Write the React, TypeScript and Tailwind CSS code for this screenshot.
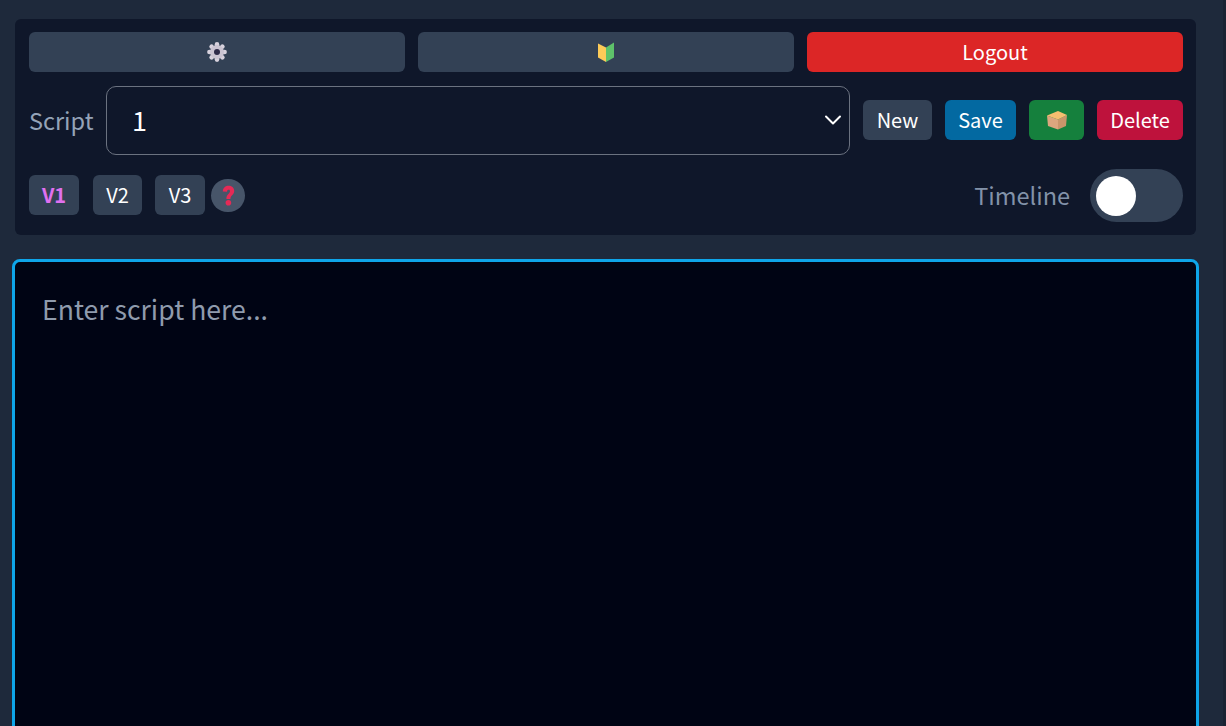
const font = { fontFamily: '"Noto Sans CJK JP", "Noto Sans", sans-serif' };

function Gear() {
  const teeth = [0, 45, 90, 135, 180, 225, 270, 315];
  return (
    <svg width="20" height="20" viewBox="0 0 20 20">
      {teeth.map((a) => (
        <circle key={a} cx="10" cy="2.4" r="2.3" fill="#d8d2de" transform={`rotate(${a} 10 10)`} />
      ))}
      <circle cx="10" cy="10" r="7" fill="#cbc4d2" />
      <circle cx="10" cy="10" r="3" fill="#2e2a48" />
    </svg>
  );
}

function Beginner() {
  return (
    <svg width="18" height="20" viewBox="0 0 18 20">
      <path d="M1 1.5 L9 5.5 V20 L1 15.5 Z" fill="#fdcb58" />
      <path d="M17 0.5 L9 5.5 V20 L17 15.5 Z" fill="#5ec26a" />
    </svg>
  );
}

function Box() {
  return (
    <svg width="22" height="20" viewBox="0 0 22 20">
      <path d="M1 5.5 L12 9.5 V19.5 L2 16 Z" fill="#dca67e" />
      <path d="M21 5 L12 9.5 V19.5 L20 16 Z" fill="#c9956a" />
      <path d="M1 5.5 L12 1 L21 5 L12 9.5 Z" fill="#f5be70" />
    </svg>
  );
}

function Question() {
  return (
    <svg width="13" height="21" viewBox="0 0 13 21">
      <path d="M0.8 6.4 C0.8 -1.2 12.2 -1.2 12.2 6 C12.2 9.8 8.6 10 8.4 14 H4.4 C4.3 9.2 8 8.6 8 6.2 C8 4.2 5 4.4 5 6.8 Z" fill="#e62a56" />
      <circle cx="6.4" cy="17.8" r="2.8" fill="#e62a56" />
    </svg>
  );
}

export default function App() {
  return (
    <div style={font} className="flex h-[726px] overflow-hidden bg-[#1e293b]">
      <div className="flex-1 pl-3 pr-6 pt-[19px]">
        <div className="ml-[3px] mr-[3px] flex flex-col rounded-md bg-[#0f172a] pl-[14px] pr-[13px] pt-[13px] pb-[13px]">
          <div className="grid grid-cols-3 gap-[13px]">
            <button className="flex h-10 items-center justify-center rounded-md bg-[#334155]"><Gear /></button>
            <button className="flex h-10 items-center justify-center rounded-md bg-[#334155]"><Beginner /></button>
            <button className="flex h-10 items-center justify-center rounded-md bg-[#dc2626] text-xl text-white">Logout</button>
          </div>

          <div className="mt-[14px] flex items-start">
            <span className="w-[63px] shrink-0 self-center whitespace-nowrap text-[23.5px] text-[#94a3b8]">Script</span>
            <div className="relative ml-[14px] flex h-[69px] flex-1 items-center rounded-[10px] border border-[#6b7280] pl-[25px] text-[27px] text-white">
              1
              <svg className="absolute right-[7px] top-[26px]" width="18" height="14" viewBox="0 0 18 14" fill="none">
                <path d="M2 3.5 L9 10.5 L16 3.5" stroke="#ffffff" strokeWidth="2" strokeLinecap="round" strokeLinejoin="round" />
              </svg>
            </div>
            <div className="ml-[13px] mt-[14px] flex gap-[13px] text-xl text-white">
              <button className="flex h-10 w-[69px] items-center justify-center rounded-md bg-[#334155]">New</button>
              <button className="flex h-10 w-[71px] items-center justify-center rounded-md bg-[#0369a1]">Save</button>
              <button className="flex h-10 w-[55px] items-center justify-center rounded-md bg-[#15803d]"><Box /></button>
              <button className="flex h-10 w-[86px] items-center justify-center rounded-md bg-[#be123c]">Delete</button>
            </div>
          </div>

          <div className="mt-[14px] flex h-[53px] items-start">
            <button className="mt-[6px] flex h-10 w-[50px] items-center justify-center rounded-md bg-[#334155] text-xl font-bold text-[#e070f0]">V1</button>
            <button className="ml-[14px] mt-[6px] flex h-10 w-[49px] items-center justify-center rounded-md bg-[#334155] text-xl text-white">V2</button>
            <button className="ml-[13px] mt-[6px] flex h-10 w-[50px] items-center justify-center rounded-md bg-[#334155] text-xl text-white">V3</button>
            <span className="ml-[6px] mt-[10px] flex h-[33px] w-[34px] items-center justify-center rounded-full bg-[#475569]"><Question /></span>
            <span className="ml-auto self-center text-[23.5px] text-[#8292a9]">Timeline</span>
            <div className="ml-[20px] flex h-[53px] w-[93px] items-center rounded-full bg-[#334155] pl-[6px]">
              <span className="h-10 w-10 rounded-full bg-white" />
            </div>
          </div>
        </div>

        <div className="mt-6 h-[520px] rounded-lg border-[3px] border-[#0ea5e9] bg-[#000414] pl-[27px] pt-[27px] text-[26.6px] leading-[40px] text-[#8f9bad]">
          Enter script here...
        </div>
      </div>
      <div className="w-[3px] shrink-0 bg-[#1a2333]" />
    </div>
  );
}
